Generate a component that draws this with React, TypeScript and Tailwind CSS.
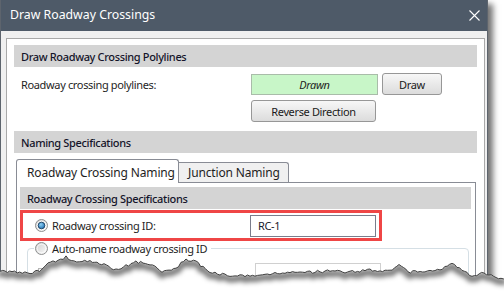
import React from "react";

const anchors: [number, number][] = [
  [-2, 270], [12, 272], [30, 273], [42, 270], [48, 263], [58, 261], [66, 257], [74, 262],
  [90, 261], [104, 264], [116, 270], [126, 266], [136, 262], [150, 264], [162, 272],
  [176, 268], [186, 259], [196, 262], [210, 272], [230, 276], [250, 276], [270, 274],
  [290, 272], [310, 272], [330, 271], [350, 272], [370, 270], [390, 271], [399, 265],
  [408, 272], [425, 272], [440, 269], [452, 264], [462, 270], [472, 276], [484, 273],
  [496, 278], [506, 280],
];

function buildTear() {
  const pts: [number, number][] = [];
  for (let i = 0; i < anchors.length - 1; i++) {
    const [x0, y0] = anchors[i];
    const [x1, y1] = anchors[i + 1];
    const steps = Math.max(1, Math.round((x1 - x0) / 2.5));
    for (let s = 0; s < steps; s++) {
      const t = s / steps;
      const x = x0 + (x1 - x0) * t;
      const n = Math.sin(x * 12.9898 + 3.1) * 43758.5453;
      const j = (n - Math.floor(n) - 0.5) * 2.6;
      pts.push([x, y0 + (y1 - y0) * t + j]);
    }
  }
  pts.push(anchors[anchors.length - 1]);
  const line = pts.map((p, i) => `${i ? "L" : "M"}${p[0].toFixed(1)} ${p[1].toFixed(1)}`).join(" ");
  return { line, fill: `${line} L506 300 L-2 300 Z` };
}

const tear = buildTear();

function Radio({ checked }: { checked?: boolean }) {
  return (
    <svg width="13" height="13" viewBox="0 0 13 13" className="shrink-0">
      <defs>
        <linearGradient id="radioBg" x1="0" y1="0" x2="1" y2="1">
          <stop offset="0" stopColor="#cfcfcf" />
          <stop offset="1" stopColor="#fbfbfb" />
        </linearGradient>
        <radialGradient id="radioDot" cx="0.4" cy="0.35" r="0.7">
          <stop offset="0" stopColor="#8fd0f5" />
          <stop offset="1" stopColor="#1d6fb0" />
        </radialGradient>
      </defs>
      <circle cx="6.5" cy="6.5" r="6" fill="url(#radioBg)" stroke="#8e8f8f" />
      <circle cx="6.5" cy="6.5" r="4.3" fill="none" stroke="#ffffff" strokeOpacity="0.7" />
      {checked && <circle cx="6.5" cy="6.5" r="3.3" fill="url(#radioDot)" stroke="#1a3f63" strokeWidth="0.9" />}
    </svg>
  );
}

function SectionBar({ children, className = "" }: { children: React.ReactNode; className?: string }) {
  return (
    <div className={`flex h-[22px] items-center bg-[#d4d4d4] pl-[7px] text-[11px] font-medium tracking-[-0.35px] text-[#14142a] ${className}`}>
      {children}
    </div>
  );
}

function Button({ children, className = "" }: { children: React.ReactNode; className?: string }) {
  return (
    <div
      className={`flex h-[22px] items-center justify-center rounded-[3px] border border-[#979797] bg-gradient-to-b from-[#f7f7f7] to-[#dcdcdc] text-[#1a1a1a] ${className}`}
    >
      {children}
    </div>
  );
}

export default function App() {
  return (
    <div className="relative h-[296px] w-[504px] overflow-hidden bg-white font-['Noto_Sans',sans-serif] text-[11px] leading-none tracking-[-0.35px] whitespace-nowrap text-[#1e1e1e]">
      <div className="flex h-[320px] w-[488px] flex-col border-x border-[#5d646d] shadow-[5px_4px_6px_rgba(0,0,0,0.55)]">
        {/* title bar */}
        <div className="flex h-[31px] shrink-0 items-center justify-between bg-[#4e5a68] pl-[9px] pr-[7px] text-[12.3px] tracking-normal text-white">
          <span>Draw Roadway Crossings</span>
          <svg width="11" height="11" viewBox="0 0 11 11">
            <path d="M0.5 0.5L10.5 10.5M10.5 0.5L0.5 10.5" stroke="#ffffff" strokeWidth="1.1" />
          </svg>
        </div>

        <div className="flex-1 bg-[#f0f0f0] pl-[5px] pr-[2px] pt-[7px]">
          <div className="h-full border border-[#a9a9a9] bg-white px-[7px] pt-[6px]">
            <SectionBar>Draw Roadway Crossing Polylines</SectionBar>

            <div className="mt-[6px] flex h-[22px] items-center">
              <span className="w-[237px] pl-[7px]">Roadway crossing polylines:</span>
              <div className="flex h-[21px] w-[127px] items-center justify-center border border-[#a9bca9] bg-[#c8f6c8] italic">
                Drawn
              </div>
              <Button className="ml-[4px] w-[60px]">Draw</Button>
            </div>

            <div className="mt-[5px] pl-[237px]">
              <Button className="w-[125px]">Reverse Direction</Button>
            </div>

            <SectionBar className="mt-[9px]">Naming Specifications</SectionBar>

            {/* tabs */}
            <div className="ml-[2px] mr-[1px] mt-[6px]">
              <div className="flex h-[23px] items-start">
                <div className="relative z-10 flex h-[24px] w-[163px] items-center rounded-t-[3px] border border-b-0 border-[#898c95] bg-white pl-[10px] pt-[2px] text-[12px] tracking-[-0.15px]">
                  Roadway Crossing Naming
                </div>
                <div className="-ml-px mt-[3px] flex h-[20px] w-[111px] items-center rounded-tr-[3px] border border-b-0 border-[#898c95] bg-[#f0f0f0] pl-[9px] pt-[1px] text-[12px] tracking-[-0.15px]">
                  Junction Naming
                </div>
              </div>

              <div className="h-[200px] border border-[#898c95] pl-[3px] pr-[4px] pt-[4px]">
                <SectionBar>Roadway Crossing Specifications</SectionBar>

                <div className="mt-[1px] flex h-[31px] w-[362px] items-center border-[3px] border-[#ef4646] pl-[12px] pr-[3px]">
                  <Radio checked />
                  <span className="ml-[4px] flex-1">Roadway crossing ID:</span>
                  <div className="flex h-[22px] w-[126px] items-center border border-[#7a7d8c] pl-[7px] text-[#1a1a2e]">
                    RC-1
                  </div>
                </div>

                <fieldset className="ml-[7px] mt-[1px] h-[80px] w-[442px] rounded-[4px] border border-[#d5dfe5]">
                  <legend className="ml-[6px] flex items-center pl-[1px] pr-[4px]">
                    <Radio />
                    <span className="ml-[4px]">Auto-name roadway crossing ID</span>
                  </legend>
                  <div className="mt-[8px] flex items-center pl-[10px]">
                    <div className="h-[13px] w-[13px] border border-[#b5b5b5] bg-[#f4f4f4]" />
                    <span className="ml-[4px] w-[200px] text-[#6d6d6d]">Roadway crossing ID prefix</span>
                    <div className="h-[22px] w-[126px] border border-[#d0d0d0]" />
                  </div>
                </fieldset>
              </div>
            </div>
          </div>
        </div>
      </div>

      {/* torn paper edge */}
      <svg className="pointer-events-none absolute left-0 top-0" width="504" height="296" viewBox="0 0 504 296">
        <defs>
          <clipPath id="below">
            <path d={tear.fill} />
          </clipPath>
          <filter id="soft" x="-5%" y="-50%" width="110%" height="200%">
            <feGaussianBlur stdDeviation="2.4" />
          </filter>
        </defs>
        <path d={tear.fill} fill="#ffffff" />
        <g clipPath="url(#below)">
          <path d={tear.line} transform="translate(0 3)" fill="none" stroke="#000000" strokeOpacity="0.55" strokeWidth="6" filter="url(#soft)" />
        </g>
        <path d={tear.line} fill="none" stroke="#3f3f3f" strokeWidth="1" />
      </svg>
    </div>
  );
}
